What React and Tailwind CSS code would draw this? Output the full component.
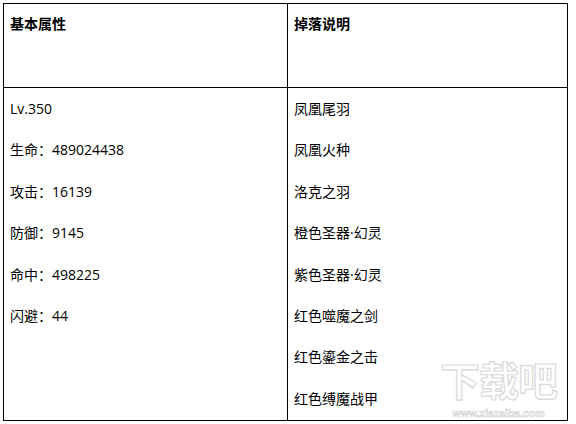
const stats = ['Lv.350', '生命：489024438', '攻击：16139', '防御：9145', '命中：498225', '闪避：44']

const drops = ['凤凰尾羽', '凤凰火种', '洛克之羽', '橙色圣器·幻灵', '紫色圣器·幻灵', '红色噬魔之剑', '红色鎏金之击', '红色缚魔战甲']

const font = { fontFamily: '"Open Sans", "Noto Sans CJK SC", sans-serif' }

function Line({ children }) {
  return <p className="pt-[9px] pb-[11.4px] leading-[21px] whitespace-nowrap">{children}</p>
}

export default function App() {
  return (
    <div className="w-[576px] h-[424px] overflow-hidden bg-white pt-[3px] pl-[3px] text-[14px] text-black" style={font}>
      <div className="relative w-[565px] h-[418px] border border-black flex flex-col">
        <div className="flex h-[84px] border-b border-black font-bold">
          <div className="w-[284px] border-r border-black pl-[6px]">
            <Line>基本属性</Line>
          </div>
          <div className="flex-1 pl-[6px]">
            <Line>掉落说明</Line>
          </div>
        </div>
        <div className="flex flex-1 overflow-hidden">
          <div className="w-[284px] border-r border-black pl-[6px] pt-[1px]">
            {stats.map((s) => (
              <Line key={s}>{s}</Line>
            ))}
          </div>
          <div className="flex-1 pl-[6px] pt-[1px]">
            {drops.map((d) => (
              <Line key={d}>{d}</Line>
            ))}
          </div>
        </div>

        {/* watermark */}
        <div className="absolute left-[436px] top-[351px] flex flex-col items-center whitespace-nowrap pointer-events-none">
          <span
            className="text-[40px] leading-[48px] font-bold tracking-[-1px] text-white"
            style={{ WebkitTextStroke: '1.2px #d9d9d9', fontFamily: '"Noto Sans CJK SC", sans-serif' }}
          >
            下载吧
          </span>
          <span
            className="mt-[5px] text-[10.5px] leading-[11px] font-bold text-white"
            style={{ WebkitTextStroke: '0.6px #cfcfcf', fontFamily: '"Liberation Sans", sans-serif' }}
          >
            www.xiazaiba.com
          </span>
        </div>
      </div>
    </div>
  )
}
